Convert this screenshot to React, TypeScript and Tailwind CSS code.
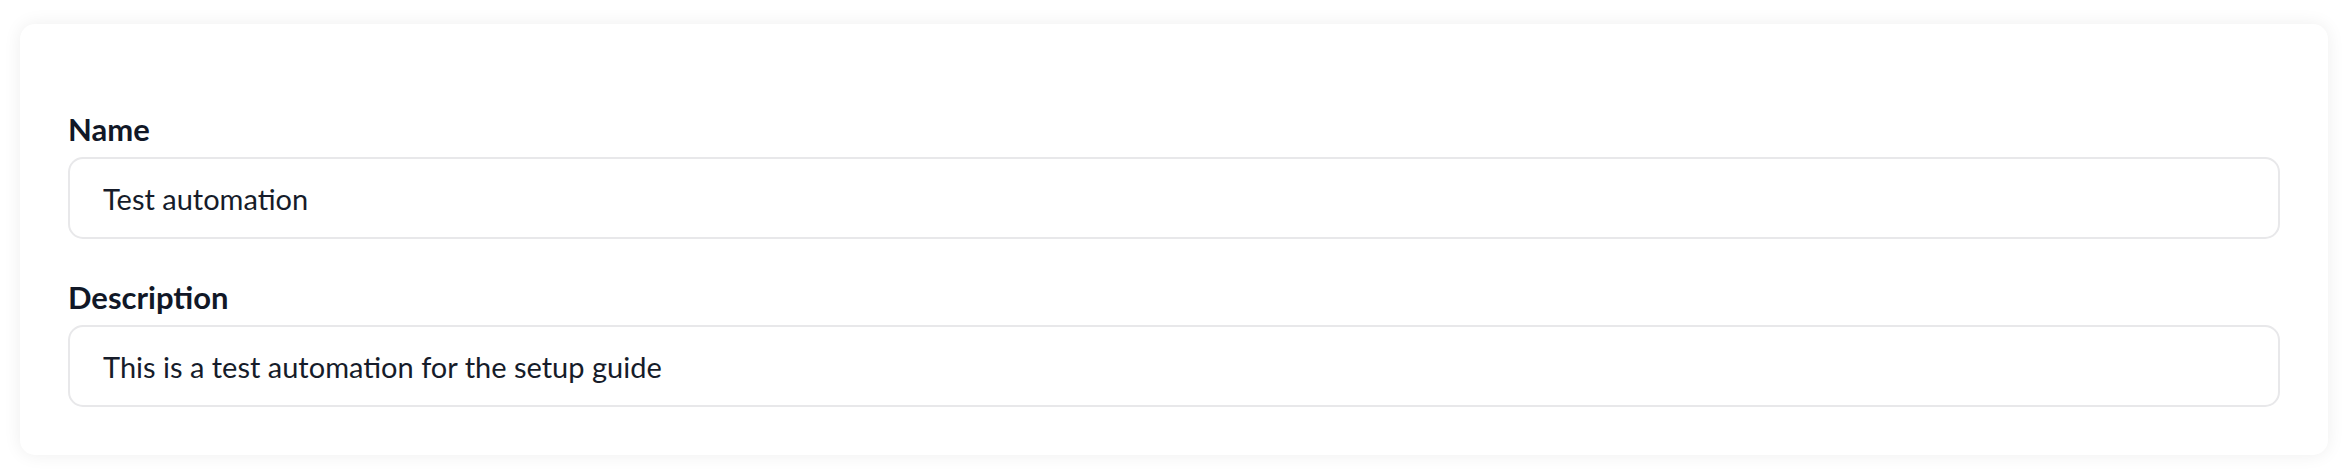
import React from "react";

type FieldProps = { id: string; label: string; value: string };

function Field({ id, label, value }: FieldProps) {
  return (
    <div className="flex flex-col">
      <label htmlFor={id} className="text-[31px] font-bold leading-[36px] text-[#111827]">
        {label}
      </label>
      <input
        id={id}
        type="text"
        defaultValue={value}
        className="mt-[10px] h-[82px] w-full rounded-[15px] border-2 border-[#e8e8ea] bg-white pl-[33px] text-[29px] text-[#161c2a] outline-none"
      />
    </div>
  );
}

export default function App() {
  return (
    <div
      className="min-h-[474px] bg-white pb-[19px] pl-[20px] pr-[16px] pt-[24px]"
      style={{ fontFamily: "Lato, 'Noto Sans', sans-serif" }}
    >
      <div className="flex flex-col gap-[40px] rounded-[15px] bg-white px-12 pb-12 pt-[87px] shadow-[0_0_18px_rgba(0,0,0,0.07)]">
        <Field id="name" label="Name" value="Test automation" />
        <Field id="description" label="Description" value="This is a test automation for the setup guide" />
      </div>
    </div>
  );
}
